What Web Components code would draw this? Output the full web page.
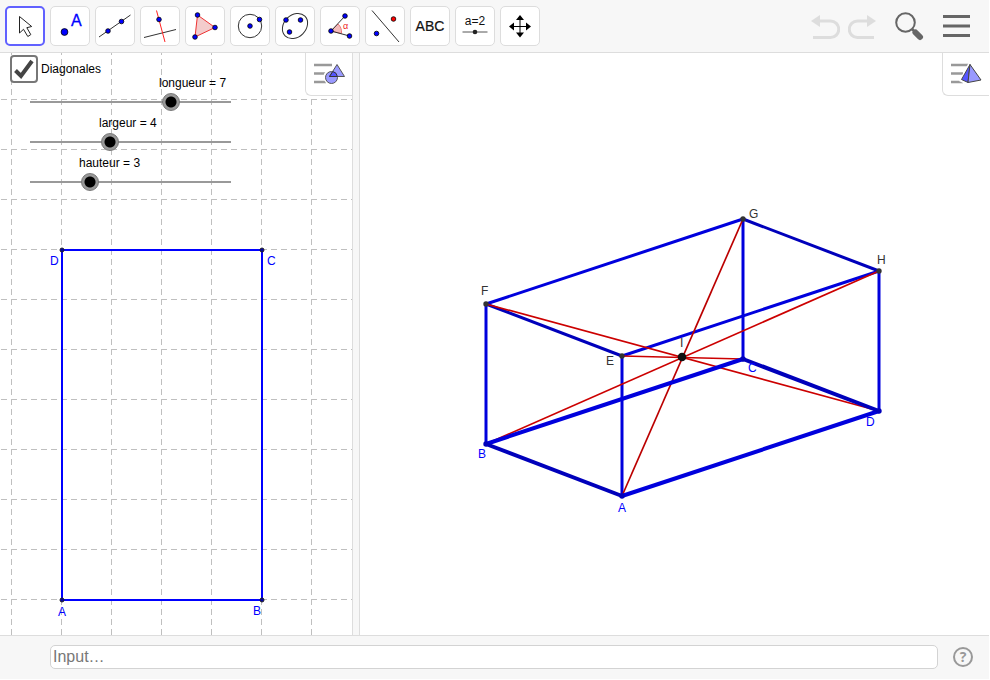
<!DOCTYPE html>
<html lang="fr">
<head>
<meta charset="utf-8">
<meta name="viewport" content="width=device-width, initial-scale=1">
<title>Pavé droit</title>
<style>
  body {
    margin: 0;
    height: 100vh;
    background: #fff;
    font-family: "Liberation Sans", Arial, sans-serif;
    font-size: 12px;
  }
</style>
</head>
<body>

<geo-app>
  <geo-toolbar slot="toolbar"></geo-toolbar>
  <geo-graphics slot="plane">
    <geo-checkbox label="Diagonales"></geo-checkbox>
    <geo-slider style="--x: 30px; --y: 22px" name="longueur" value="7"></geo-slider>
    <geo-slider style="--x: 30px; --y: 62px" name="largeur" value="4"></geo-slider>
    <geo-slider style="--x: 30px; --y: 102px" name="hauteur" value="3"></geo-slider>
  </geo-graphics>
  <geo-space slot="space"></geo-space>
  <geo-input slot="input"></geo-input>
</geo-app>

<script>
/* Dessin de chaque outil, dans un carré de 38 x 38 */
const dot = (x, y, r = 2.3, fill = '#00f') =>
  `<circle cx="${x}" cy="${y}" r="${r}" fill="${fill}" stroke="#000" stroke-width=".8"/>`;

const TOOLS = [
  ['Déplacer', `<path d="M13.5 9.5v16.5l4-3.7 4.3 7.2 3-1.9-4-6.9 4.9-1.2z" fill="#fff" stroke="#222"/>`],
  ['Point', `${dot(13.5, 25, 3.4)}<text x="20" y="19" font-size="16" fill="#00f" stroke="#00f" stroke-width=".3">A</text>`],
  ['Droite', `<path d="M3 30 34.5 8" stroke="#333"/>${dot(12, 24)}${dot(25.5, 14.5)}`],
  ['Perpendiculaire', `<path d="M3 30.5 35 22.5" stroke="#333"/><path d="M15.5 3.5 24 35" stroke="#f22"/>${dot(18, 12.5)}`],
  ['Polygone', `<path d="M11.5 8 29 20.500 9 30z" fill="#f3cccc" stroke="#e33"/>${dot(11.5, 8)}${dot(29, 20.5)}${dot(9, 30)}`],
  ['Cercle', `<circle cx="19" cy="19" r="11.7" fill="none" stroke="#333"/>${dot(19, 19)}${dot(28.5, 12.5)}`],
  ['Ellipse', `<ellipse cx="19" cy="19" rx="14" ry="11" transform="rotate(-45 19 19)" fill="none" stroke="#333"/>${dot(10, 13)}${dot(24.5, 13)}${dot(13.5, 25)}`],
  ['Angle', `<path d="M10 24 17 17Q21 20.5 20.5 26.500z" fill="#f5bcbc" stroke="#e77"/><path d="M24 9 10 24 28.5 29" fill="none" stroke="#333"/>${dot(24, 9)}${dot(10, 24)}${dot(28.5, 29)}<text x="22" y="22" font-size="9" fill="#e22">α</text>`],
  ['Symétrie', `<path d="M6 3.500 33 35" stroke="#333"/>${dot(27.5, 12, 2.3, '#f00')}${dot(10.5, 26.5)}`],
  ['Texte', `<text x="19" y="24" font-size="14" text-anchor="middle" fill="#111" stroke="#111" stroke-width=".2">ABC</text>`],
  ['Curseur', `<text x="19" y="18" font-size="12" text-anchor="middle" fill="#111">a=2</text><path d="M6.5 25h25" stroke="#555"/><circle cx="19" cy="25" r="2.300" fill="#222"/>`],
  ['Déplacer la vue', `<path d="M19 12v15M11 19.500h17" stroke="#000"/><path d="M19 8l4 5h-8zM19 30.500l4-5h-8zM8 19.500l5-4v8zM30 19.500l-5-4v8z"/>`]
];

const BARS = `<path d="M0 3h18M0 11.500h12M0 20h12" stroke="#999" stroke-width="2.600"/>`;

/**
 * Disposition générale : barre d'outils, deux vues, champ de saisie.
 */
class GeoApp extends HTMLElement {
  constructor() {
    super();
    this.attachShadow({ mode: 'open' });
    this.shadowRoot.innerHTML = `
      <style>
        :host {
          display: grid;
          grid-template-rows: auto 1fr auto;
          height: 100%;
          box-sizing: border-box;
          padding: 0 1px 1px 0;
        }
        main {
          display: grid;
          grid-template-columns: 14fr 8px 25fr;
          min-height: 0;
        }
        .split {
          box-sizing: border-box;
          background: #f7f7f7;
          border: 1px solid #ddd;
          border-width: 0 1px;
        }
      </style>
      <slot name="toolbar"></slot>
      <main>
        <slot name="plane"></slot>
        <div class="split"></div>
        <slot name="space"></slot>
      </main>
      <slot name="input"></slot>`;
  }
}

/**
 * Un bouton de la barre d'outils, icône passée par le slot.
 */
class GeoTool extends HTMLElement {
  connectedCallback() {
    const on = this.hasAttribute('selected');
    this.attachShadow({ mode: 'open' }).innerHTML = `
      <style>
        :host { display: block; }
        button {
          display: grid;
          place-items: center;
          box-sizing: border-box;
          width: 40px;
          height: 40px;
          padding: 0;
          border: 1px solid #ddd;
          border-radius: 5px;
          background: #fff;
          font: inherit;
        }
        button.on { border: 2px solid #6161ff; }
      </style>
      <button class="${on ? 'on' : ''}" aria-label="${this.getAttribute('label')}"><slot></slot></button>`;
  }
}

class GeoToolbar extends HTMLElement {
  constructor() {
    super();
    const tools = TOOLS.map(([label, art], i) => `
      <geo-tool label="${label}" ${i === 0 ? 'selected' : ''}>
        <svg width="38" height="38" viewBox="0 0 38 38">${art}</svg>
      </geo-tool>`).join('');

    this.attachShadow({ mode: 'open' }).innerHTML = `
      <style>
        :host {
          display: flex;
          justify-content: space-between;
          align-items: center;
          box-sizing: border-box;
          height: 53px;
          padding: 0 19px 0 5px;
          background: #f7f7f7;
          border-bottom: 1px solid #ddd;
        }
        nav { display: flex; gap: 5px; }
        svg { display: block; }
        geo-tool svg { margin: -1px; }
        .menu { gap: 18px; }
        .history { display: flex; gap: 8px; }
        .menu button { border: 0; padding: 0; background: none; }
      </style>
      <nav>${tools}</nav>
      <nav class="menu">
        <div class="history">
          <button aria-label="Annuler" disabled><svg width="29" height="30" viewBox="0 0 29 30">
            <path d="M7 10h12.500a8 8 0 0 1 0 16.500H2" fill="none" stroke="#ddd" stroke-width="3"/>
            <path d="M0 10 9 4v12z" fill="#ddd"/></svg></button>
          <button aria-label="Rétablir" disabled><svg width="29" height="30" viewBox="0 0 29 30">
            <path d="M20 10H9.500a8 8 0 0 0 0 16.500H26" fill="none" stroke="#ddd" stroke-width="3"/>
            <path d="M28 10 19 4v12z" fill="#ddd"/></svg></button>
        </div>
        <button aria-label="Rechercher"><svg width="30" height="30" viewBox="0 0 30 30">
          <circle cx="10.500" cy="11.500" r="9.300" fill="none" stroke="#666" stroke-width="2"/>
          <path d="M17 18 21 22" stroke="#666" stroke-width="2.500"/>
          <path d="M20.500 21.500 25 26" stroke="#666" stroke-width="6" stroke-linecap="round"/></svg></button>
        <button aria-label="Menu"><svg width="27" height="30" viewBox="0 0 27 30">
          <path d="M0 5.500h27M0 15h27M0 24.500h27" stroke="#666" stroke-width="3"/></svg></button>
      </nav>`;
  }
}

/**
 * Onglet de style, posé dans l'angle supérieur droit d'une vue.
 */
class GeoStylebar extends HTMLElement {
  constructor() {
    super();
    this.attachShadow({ mode: 'open' }).innerHTML = `
      <style>
        :host { display: block; position: absolute; top: 0; right: 0; }
        button {
          display: grid;
          place-items: center;
          box-sizing: border-box;
          width: 47px;
          height: 43px;
          padding: 0;
          border: 1px solid #ddd;
          border-width: 0 0 1px 1px;
          border-radius: 0 0 0 6px;
          background: #fff;
        }
      </style>
      <button aria-label="Barre de style"><slot></slot></button>`;
  }
}

class GeoCheckbox extends HTMLElement {
  connectedCallback() {
    this.attachShadow({ mode: 'open' }).innerHTML = `
      <style>
        :host { display: block; position: absolute; left: 10px; top: 2px; }
        label { display: flex; align-items: center; gap: 3px; }
        input {
          appearance: none;
          box-sizing: border-box;
          width: 28px;
          height: 28px;
          margin: 0;
          border: 2px solid #777;
          border-radius: 4px;
          background: #fff;
        }
        .box { display: grid; }
        .box > * { grid-area: 1 / 1; }
        svg { pointer-events: none; visibility: hidden; }
        input:checked + svg { visibility: visible; }
      </style>
      <label>
        <span class="box">
          <input type="checkbox" checked>
          <svg width="28" height="28" viewBox="0 0 28 28">
            <path d="M5.500 15.500 11 21 22 6" fill="none" stroke="#444" stroke-width="4"/>
          </svg>
        </span>
        ${this.getAttribute('label')}
      </label>`;
  }
}

/**
 * Curseur de 0 à 10 ; l'étiquette suit la position du bouton.
 */
class GeoSlider extends HTMLElement {
  connectedCallback() {
    const name = this.getAttribute('name');
    const value = this.getAttribute('value');
    this.attachShadow({ mode: 'open' }).innerHTML = `
      <style>
        :host {
          display: block;
          position: absolute;
          left: var(--x);
          top: var(--y);
          width: 201px;
        }
        label {
          display: block;
          line-height: 16px;
          white-space: nowrap;
          padding-left: calc(var(--v) * 20px - 11px);
        }
        input {
          appearance: none;
          display: block;
          box-sizing: border-box;
          width: 219px;
          height: 18px;
          margin: 2px -9px 0;
          background: linear-gradient(#999, #999) center / 201px 2px no-repeat;
        }
        input::-webkit-slider-thumb {
          appearance: none;
          box-sizing: border-box;
          width: 18px;
          height: 18px;
          border: 1px solid #777;
          border-radius: 50%;
          background: radial-gradient(circle, #000 5px, #999 6px);
        }
      </style>
      <label for="r">${name} = ${value}</label>
      <input id="r" type="range" min="0" max="10" value="${value}">`;

    const label = this.shadowRoot.querySelector('label');
    const input = this.shadowRoot.querySelector('input');
    label.style.setProperty('--v', value);
    input.addEventListener('input', () => {
      label.textContent = `${name} = ${input.value}`;
      label.style.setProperty('--v', input.value);
    });
  }
}

/**
 * Vue 2D : quadrillage, rectangle de base et curseurs (slot).
 */
class GeoGraphics extends HTMLElement {
  constructor() {
    super();
    const points = [['A', 62, 547, 58, 563], ['B', 262, 547, 253, 562],
                    ['C', 262, 197, 267, 212], ['D', 62, 197, 50, 212]];

    this.attachShadow({ mode: 'open' }).innerHTML = `
      <style>
        :host {
          display: block;
          position: relative;
          overflow: hidden;
          background: #fff;
        }
        .plane { display: block; width: 100%; height: 100%; }
        .grid path { stroke: #bfbfbf; stroke-dasharray: 6 4; }
        text { font-size: 12px; fill: #00f; }
      </style>
      <svg class="plane">
        <defs>
          <pattern id="grid" class="grid" width="50" height="50" x="11" y="46" patternUnits="userSpaceOnUse">
            <path d="M.5 0v50M0 .5h50"/>
          </pattern>
        </defs>
        <rect width="100%" height="100%" fill="url(#grid)"/>
        <path d="M62 197h200v350H62z" fill="none" stroke="#00f" stroke-width="2"/>
        ${points.map(([n, x, y, tx, ty]) => `
          <circle cx="${x}" cy="${y}" r="2" fill="#00a" stroke="#222"/>
          <text x="${tx}" y="${ty}">${n}</text>`).join('')}
      </svg>
      <slot></slot>
      <geo-stylebar>
        <svg width="31" height="24" viewBox="0 0 31 24">${BARS}
          <circle cx="17.500" cy="15" r="8" fill="#fff"/>
          <path d="M23 1 12 16h19z" fill="#fff"/>
          <circle cx="17.500" cy="15.500" r="6" fill="#99f" stroke="#555"/>
          <path d="M23 2.500 30.500 14.500H15.500z" fill="#99f" stroke="#555"/>
          <path d="M18.800 9.500A6 6 0 0 1 23.400 14.500H15.500z" fill="#55f" stroke="#333"/>
        </svg>
      </geo-stylebar>`;
  }
}

/**
 * Vue 3D : pavé droit ABCDEFGH et ses diagonales.
 */
class GeoSpace extends HTMLElement {
  constructor() {
    super();
    const P = {
      A: [262, 443], B: [126, 391], C: [383, 306], D: [519, 358],
      E: [262, 303], F: [126, 251], G: [383, 166], H: [519, 218]
    };
    const labels = { A: [258, 459], B: [118, 405], C: [388, 319], D: [506, 373],
                     E: [246, 312], F: [121, 242], G: [389, 165], H: [517, 211], I: [320, 294] };
    const seg = (s, color, w) =>
      `<path d="M${P[s[0]]}L${P[s[1]]}" stroke="${color}" stroke-width="${w}"/>`;

    this.attachShadow({ mode: 'open' }).innerHTML = `
      <style>
        :host {
          display: block;
          position: relative;
          overflow: hidden;
          background: #fff;
        }
        .scene { display: block; width: 100%; height: 100%; }
        text { font-size: 12px; fill: #333; }
        text.base { fill: #00f; }
      </style>
      <svg class="scene">
        ${['BF', 'CG', 'DH', 'AE', 'FG', 'EH'].map(s => seg(s, '#00d', 3)).join('')}
        ${['GH', 'EF'].map(s => seg(s, '#00b', 3)).join('')}
        ${['AG', 'BH', 'CE', 'DF'].map(s => seg(s, s === 'AG' ? '#b00' : '#c00', 1.7)).join('')}
        ${['BC', 'AD'].map(s => seg(s, '#00d', 4)).join('')}
        ${['AB', 'CD'].map(s => seg(s, '#00b', 4)).join('')}
        ${Object.keys(P).map(n => `<circle cx="${P[n][0]}" cy="${P[n][1]}" r="2.700"
          fill="${n < 'E' ? '#00b' : '#333'}"/>`).join('')}
        <circle cx="322" cy="304" r="4.300" fill="#111"/>
        ${Object.entries(labels).map(([n, [x, y]]) =>
          `<text class="${n < 'E' ? 'base' : ''}" x="${x}" y="${y}">${n}</text>`).join('')}
      </svg>
      <geo-stylebar>
        <svg width="31" height="24" viewBox="0 0 31 24">${BARS}
          <path d="M18 0 8 19l8 4 14-5z" fill="#fff"/>
          <path d="M19 2.500 10.500 17.500 17 20.500z" fill="#55f" stroke="#444"/>
          <path d="M19 2.500 17 20.500 30 18z" fill="#99f" stroke="#444"/>
        </svg>
      </geo-stylebar>`;
  }
}

/**
 * Champ de saisie et aide.
 */
class GeoInput extends HTMLElement {
  constructor() {
    super();
    this.attachShadow({ mode: 'open' }).innerHTML = `
      <style>
        :host {
          display: flex;
          align-items: center;
          gap: 15px;
          box-sizing: border-box;
          height: 44px;
          padding: 0 16px 1px 50px;
          background: #f7f7f7;
          border-top: 1px solid #ddd;
        }
        input {
          flex: 1;
          box-sizing: border-box;
          height: 24px;
          padding: 0 2px;
          border: 1px solid #d3d3d3;
          border-radius: 5px;
          background: #fff;
          font: inherit;
          font-size: 16px;
        }
        input::placeholder { color: #777; }
        button {
          box-sizing: border-box;
          width: 20px;
          height: 20px;
          padding: 0;
          border: 2px solid #999;
          border-radius: 50%;
          background: none;
          color: #999;
          font: bold 14px/16px "Open Sans", sans-serif;
        }
      </style>
      <input type="text" placeholder="Input…" aria-label="Saisie">
      <button aria-label="Aide">?</button>`;
  }
}

customElements.define('geo-tool', GeoTool);
customElements.define('geo-toolbar', GeoToolbar);
customElements.define('geo-stylebar', GeoStylebar);
customElements.define('geo-checkbox', GeoCheckbox);
customElements.define('geo-slider', GeoSlider);
customElements.define('geo-graphics', GeoGraphics);
customElements.define('geo-space', GeoSpace);
customElements.define('geo-input', GeoInput);
customElements.define('geo-app', GeoApp);
</script>
</body>
</html>
